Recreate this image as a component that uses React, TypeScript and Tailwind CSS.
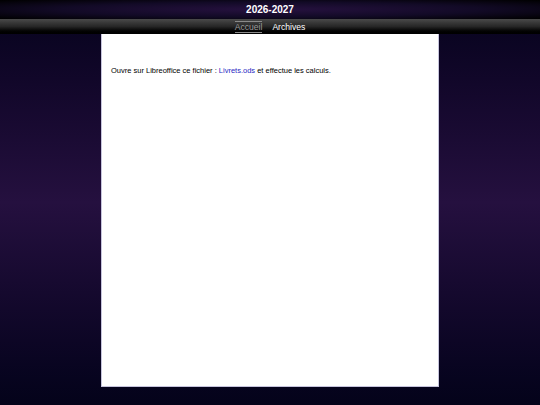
import React from 'react';

export default function App() {
  return (
    <div
      className="min-h-[405px] w-full flex flex-col bg-gradient-to-b from-[#06031c] via-[#25103f] to-[#04031a] font-['Liberation_Sans',Arial,sans-serif]"
    >
      <header className="h-[19px] flex items-center justify-center bg-[radial-gradient(ellipse_at_center,#26113f_0%,#120a26_55%,#000000_100%)]">
        <h1 className="text-[10px] font-bold text-white leading-none">2026-2027</h1>
      </header>
      <nav className="h-[15px] flex items-center justify-center gap-[10px] bg-gradient-to-b from-[#4a4a4a] via-[#262626] to-[#000000]">
        <a className="text-[8.6px] leading-[10px] text-[#9a9a9a] border-y border-[#8a8a8a]">Accueil</a>
        <a className="text-[8.6px] leading-[10px] text-white">Archives</a>
      </nav>
      <main className="flex justify-center pb-[18px]">
        <div className="w-[338px] h-[353px] bg-white border border-[#c6c4dc] border-t-0 px-[9px] pt-[32px]">
          <p className="text-[7.5px] leading-[10px] text-black">
            Ouvre sur Libreoffice ce fichier : <a className="text-[#2a2ac4]">Livrets.ods</a> et effectue les calculs.
          </p>
        </div>
      </main>
    </div>
  );
}
